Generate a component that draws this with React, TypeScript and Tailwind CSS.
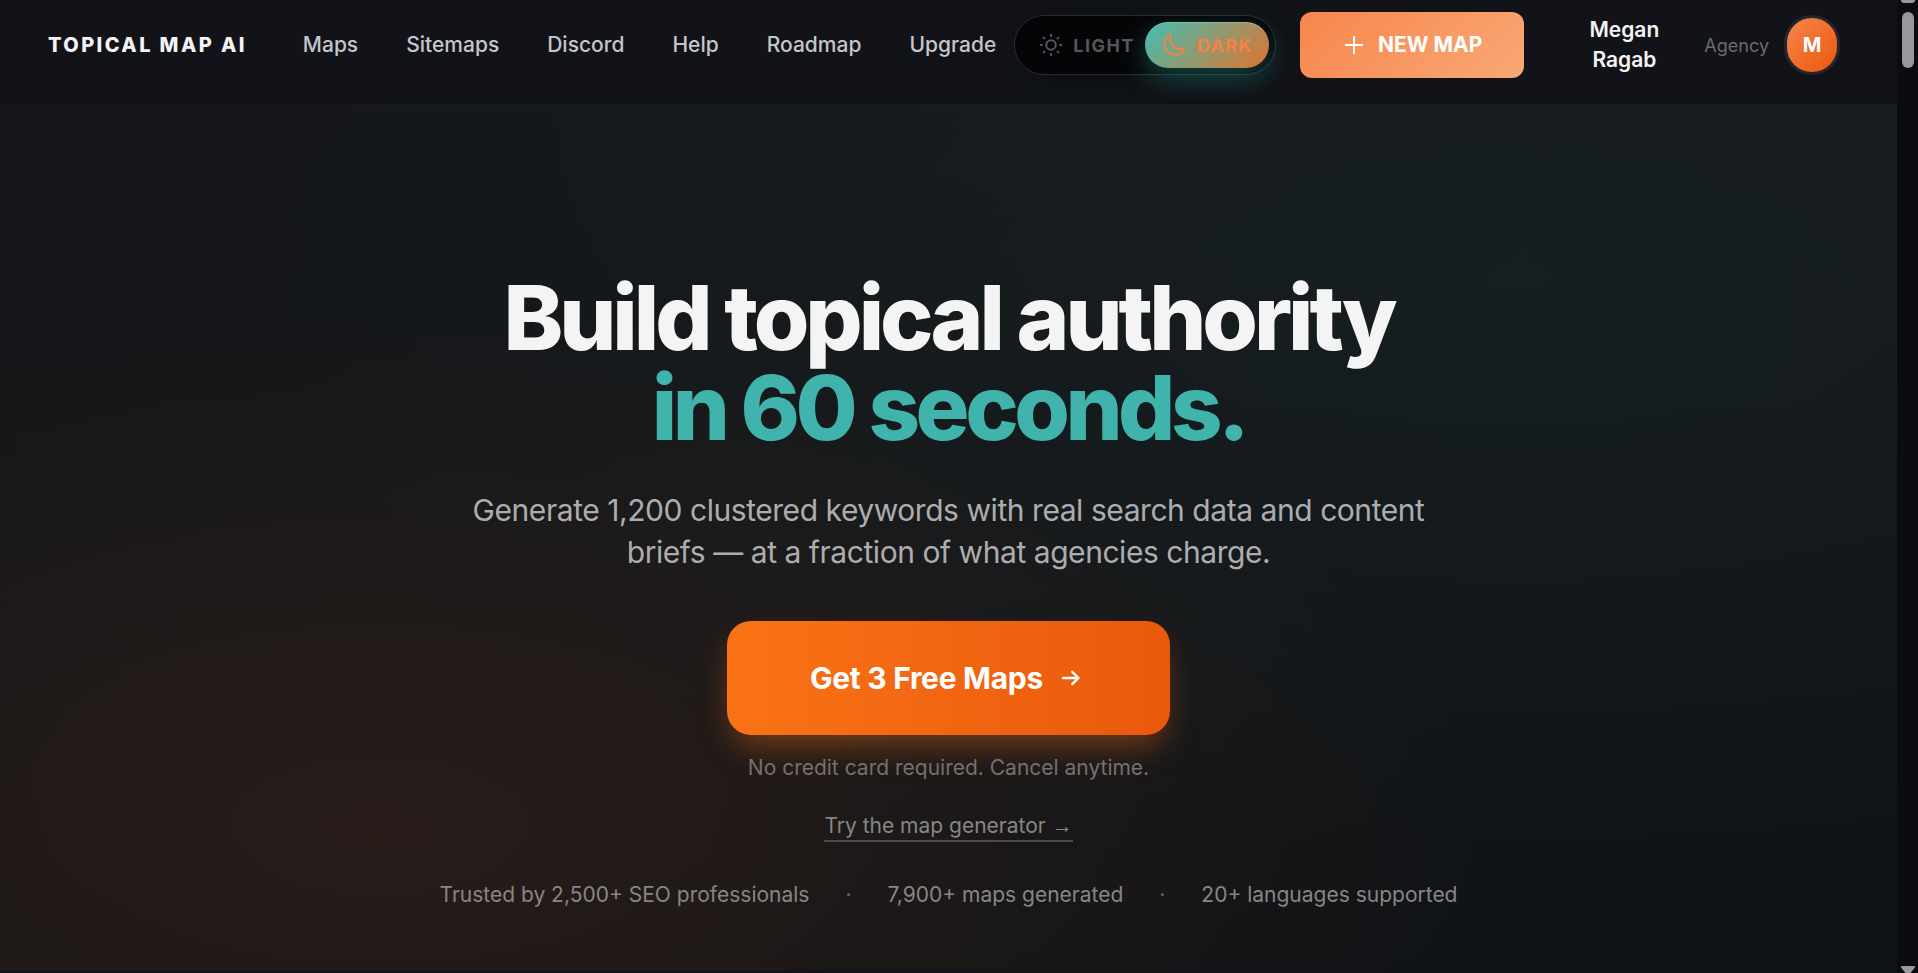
import React, { useState } from 'react';
import { clsx } from 'clsx';

const navLinks = ['Maps', 'Sitemaps', 'Discord', 'Help', 'Roadmap', 'Upgrade'];

const stats = ['Trusted by 2,500+ SEO professionals', '7,900+ maps generated', '20+ languages supported'];

const SunIcon: React.FC = () => (
  <svg width="24" height="24" viewBox="0 0 24 24" fill="none" stroke="currentColor" strokeWidth="2" strokeLinecap="round" aria-hidden="true">
    <circle cx="12" cy="12" r="4.8" />
    <path d="M12 1.7v1.2M12 21.1v1.2M1.7 12h1.2M21.1 12h1.2M4.6 4.6l.9.9M18.5 18.5l.9.9M4.6 19.4l.9-.9M18.5 5.5l.9-.9" />
  </svg>
);

const MoonIcon: React.FC = () => (
  <svg width="26" height="26" viewBox="0 0 24 24" fill="none" stroke="currentColor" strokeWidth="1.8" strokeLinecap="round" strokeLinejoin="round" aria-hidden="true">
    <path d="M21.752 15.002A9.72 9.72 0 0 1 18 15.75c-5.385 0-9.75-4.365-9.75-9.75 0-1.33.266-2.597.748-3.752A9.753 9.753 0 0 0 3 11.25C3 16.635 7.365 21 12.75 21a9.753 9.753 0 0 0 9.002-5.998Z" />
  </svg>
);

const PlusIcon: React.FC = () => (
  <svg width="24" height="24" viewBox="0 0 24 24" fill="none" stroke="currentColor" strokeWidth="2" aria-hidden="true">
    <path d="M12 3v18M3 12h18" />
  </svg>
);

const ArrowIcon: React.FC = () => (
  <svg width="24" height="24" viewBox="0 0 24 24" fill="none" stroke="currentColor" strokeWidth="2.4" strokeLinecap="round" strokeLinejoin="round" aria-hidden="true">
    <path d="M4 12h15.5M13.2 5.8l6.3 6.2-6.3 6.2" />
  </svg>
);

const ThemeToggle: React.FC = () => {
  const [theme, setTheme] = useState<'light' | 'dark'>('dark');

  const options = [
    { id: 'light' as const, label: 'LIGHT', icon: SunIcon },
    { id: 'dark' as const, label: 'DARK', icon: MoonIcon },
  ];

  return (
    <div className="flex h-15 shrink-0 items-center rounded-full border border-[#2b2c30] bg-[#050507] px-1.5 shadow-[0_8px_36px_rgba(8,16,18,0.7)]">
      {options.map((option) => (
        <button
          key={option.id}
          type="button"
          aria-pressed={theme === option.id}
          onClick={() => setTheme(option.id)}
          className={clsx(
            'flex h-[46px] items-center gap-2.5 rounded-full text-[18px] font-bold tracking-[0.08em]',
            option.id === 'light' ? 'pl-[18px] pr-2.5' : 'px-4',
            theme === option.id
              ? 'bg-linear-[135deg] from-[#40bfb2] to-[#e0742f] text-[#f5814a] shadow-[0_10px_28px_rgba(45,190,175,0.35),inset_0_1px_0_rgba(255,255,255,0.25)]'
              : 'text-[#56565c]'
          )}
        >
          <option.icon />
          {option.label}
        </button>
      ))}
    </div>
  );
};

const Header: React.FC = () => (
  <header className="flex items-center border-b border-[#191b1f] bg-[#121318] pt-3 pb-[26px] pl-12 pr-[57px]">
    <a href="#" className="mr-14 whitespace-nowrap text-[20px] leading-[30px] font-extrabold tracking-[0.12em] text-[#f4f4f5]">
      TOPICAL MAP AI
    </a>
    <nav className="flex items-center gap-12 text-[21px] leading-[30px] font-medium text-[#c5c6ca]">
      {navLinks.map((link) => (
        <a key={link} href="#" className="hover:text-white">
          {link}
        </a>
      ))}
    </nav>
    <div className="ml-auto flex items-center">
      <ThemeToggle />
      <button
        type="button"
        className="ml-6 flex h-[66px] items-center gap-3 whitespace-nowrap rounded-xl bg-linear-[135deg] from-[#f7864c] to-[#f9a875] px-[42px] text-[21px] font-bold text-white"
      >
        <PlusIcon />
        NEW MAP
      </button>
      <button type="button" className="ml-14 w-[88px] text-center text-[21px] leading-[30px] font-semibold text-[#f4f4f5]">
        Megan Ragab
      </button>
      <span className="ml-9 text-[18px] text-[#6a6a6f]">Agency</span>
      <button
        type="button"
        aria-label="Account"
        className="ml-[15px] h-15 w-14 shrink-0 rounded-full border-3 border-[#25262c] bg-linear-[135deg] from-[#f7864c] to-[#ea580c] text-[20px] font-bold text-white"
      >
        M
      </button>
    </div>
  </header>
);

const Hero: React.FC = () => (
  <main className="flex grow flex-col items-center bg-[#111317] bg-[radial-gradient(ellipse_at_20%_84%,rgba(249,110,50,0.1),transparent_52%),radial-gradient(ellipse_at_80%_20%,rgba(64,180,172,0.05),transparent_60%),linear-gradient(180deg,#15171a,#101316)] px-6 pt-[168px] pb-15 text-center">
    <h1 className="text-[90px] leading-[90px] font-extrabold tracking-[-0.045em] text-[#f4f4f5]">
      Build topical authority
      <span className="block tracking-[-0.05em] text-[#40b4ac]">in 60 seconds.</span>
    </h1>
    <p className="mt-9 max-w-[980px] text-[30px] leading-[42px] tracking-[-0.015em] text-[#adadaf]">
      Generate 1,200 clustered keywords with real search data and content briefs — at a fraction of what agencies charge.
    </p>
    <a
      href="#"
      className="mt-12 flex h-[114px] items-center gap-4 rounded-3xl bg-linear-to-r from-[#f97316] to-[#ea580c] pl-[83px] pr-[87px] text-[30px] font-bold tracking-[-0.01em] text-white shadow-[0_16px_32px_-6px_rgba(249,115,22,0.4)]"
    >
      Get 3 Free Maps
      <ArrowIcon />
    </a>
    <p className="mt-[18px] text-[21px] leading-[30px] text-[#77706c]">No credit card required. Cancel anytime.</p>
    <a href="#" className="mt-[29px] border-b-2 border-[#4a4a4a] text-[21px] leading-7 text-[#868687]">
      Try the map generator <span className="font-['Liberation_Sans',sans-serif]">→</span>
    </a>
    <ul className="mt-[38px] flex items-center text-[21px] leading-[30px] text-[#868687]">
      {stats.map((stat, i) => (
        <li key={stat} className="flex items-center">
          {i > 0 && <span className="mx-9 text-[#66666a]">·</span>}
          {stat}
        </li>
      ))}
    </ul>
  </main>
);

const ScrollRail: React.FC = () => (
  <div aria-hidden="true" className="flex w-[21px] shrink-0 flex-col items-center bg-[#0b0c10]">
    <div className="h-[3px] w-3.5 rounded-b-sm bg-[#98989a]" />
    <div className="mt-[9px] h-14 w-3 rounded-full bg-[#98989a]" />
    <svg className="mt-auto" width="14" height="7" viewBox="0 0 14 7" fill="#98989a">
      <path d="M1 0h12a1 1 0 0 1 1 1.500L9.500 7h-5L0 1.500A1 1 0 0 1 1 0z" />
    </svg>
  </div>
);

export default function App() {
  return (
    <div className="flex min-h-screen bg-[#0b0c10] font-['Inter',sans-serif]">
      <div className="flex grow flex-col">
        <Header />
        <Hero />
        <div className="h-0.5 bg-[#121318]" />
      </div>
      <ScrollRail />
    </div>
  );
}
